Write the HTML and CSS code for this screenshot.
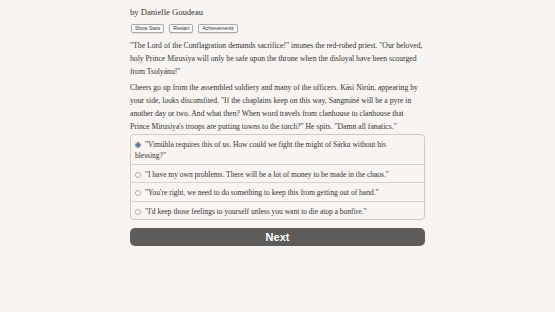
FILE: index.html
```html
<!DOCTYPE html>
<html lang="en">
<head>
  <meta charset="UTF-8">
  <title>Choice of the Rebels</title>
  <link rel="stylesheet" href="styles.css">
</head>
<body>
  <div class="container">
    <div class="author">by Danielle Goudeau</div>
    <div class="buttons">
      <button class="small-button">Show Stats</button>
      <button class="small-button">Restart</button>
      <button class="small-button">Achievements</button>
    </div>
    <p>"The Lord of the Conflagration demands sacrifice!" intones the red-robed priest. "Our beloved, holy Prince Mirusiya will only be safe upon the throne when the disloyal have been scourged from Tsolyánu!"</p>
    <p>Cheers go up from the assembled soldiery and many of the officers. Kási Nirún, appearing by your side, looks discomfited. "If the chaplains keep on this way, Sangminé will be a pyre in another day or two. And what then? When word travels from clanhouse to clanhouse that Prince Mirusiya's troops are putting towns to the torch?" He spits. "Damn all fanatics."</p>

    <form class="choices">
      <label class="choice">
        <input type="radio" name="choice" checked>
        "Vimúhla requires this of us. How could we fight the might of Sárku without his blessing?"
      </label>
      <label class="choice">
        <input type="radio" name="choice">
        "I have my own problems. There will be a lot of money to be made in the chaos."
      </label>
      <label class="choice">
        <input type="radio" name="choice">
        "You're right, we need to do something to keep this from getting out of hand."
      </label>
      <label class="choice">
        <input type="radio" name="choice">
        "I'd keep those feelings to yourself unless you want to die atop a bonfire."
      </label>
    </form>

    <button class="next-button">Next</button>
  </div>
</body>
</html>
```

FILE: styles.css
```css
body {
  margin: 0;
  background-color: #f7f4f1;
  font-family: "Liberation Serif", serif;
  color: #333;
}

.container {
  width: 295px;
  margin: 0 auto;
  padding-top: 6px;
}

.author {
  font-size: 8.6px;
  line-height: 13px;
}

.buttons {
  display: flex;
  gap: 5px;
  margin-top: 5px;
  padding-left: 1px;
}

.small-button {
  font-family: "Liberation Sans", sans-serif;
  font-size: 5px;
  line-height: 7px;
  padding: 0 3px;
  background: #fafafa;
  border: 1px solid #aaa;
  border-radius: 2px;
  color: #333;
  box-shadow: 0 1px 1px rgba(0, 0, 0, 0.1);
}

p {
  font-size: 7.7px;
  line-height: 13px;
  margin: 6px 0 0 0;
}

p + p {
  margin-top: 3px;
}

.choices {
  margin-top: 1px;
  border: 1px solid #cdcac6;
  border-radius: 4px;
  background: #f7f4f1;
}

.choice {
  display: block;
  padding: 4px 14px 2.5px 4px;
  font-size: 7.5px;
  line-height: 11px;
  border-top: 1px solid #d6d3cf;
}

.choice:first-child {
  border-top: none;
}

.choice input {
  appearance: none;
  width: 6px;
  height: 6px;
  margin: 0 2px 0 0;
  vertical-align: -1px;
  border: 1px solid #aaa;
  border-radius: 50%;
  background: #fff;
}

.choice input:checked {
  background: radial-gradient(circle, #3b6fb6 0 1.5px, #fff 2px);
  border-color: #888;
}

.next-button {
  display: block;
  width: 100%;
  margin-top: 8px;
  height: 18px;
  background: #5e5c5a;
  color: #fff;
  border: none;
  border-radius: 5px;
  font-family: "Liberation Sans", sans-serif;
  font-weight: bold;
  font-size: 11px;
}
```
